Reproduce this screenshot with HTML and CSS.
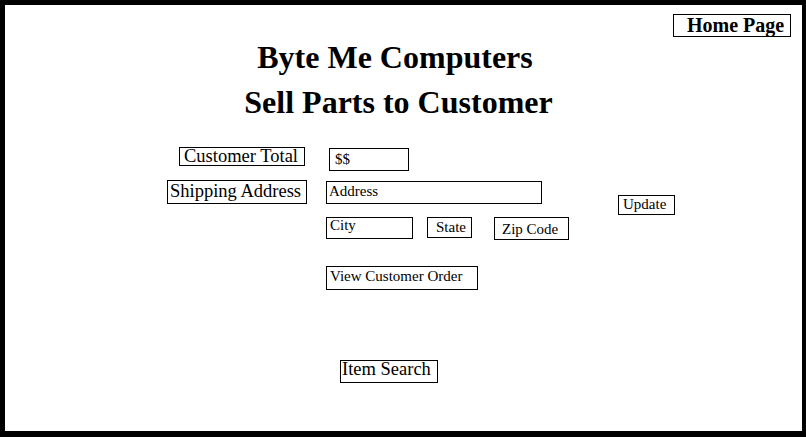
FILE: index.html
```html
<!DOCTYPE html>
<html lang="en">
<head>
<meta charset="utf-8">
<title>Sell Parts to Customer</title>
<link rel="stylesheet" href="styles.css">
</head>
<body>
<div class="frame">
  <div class="top-row">
    <div class="box home">Home Page</div>
  </div>
  <h1 class="title title-1">Byte Me Computers</h1>
  <h1 class="title title-2">Sell Parts to Customer</h1>

  <div class="row row-total">
    <div class="box label total-label">Customer Total</div>
    <div class="box field total-field">$$</div>
  </div>

  <div class="row row-address">
    <div class="box label ship-label">Shipping Address</div>
    <div class="fields">
      <div class="box field address">Address</div>
      <div class="city-row">
        <div class="box field city">City</div>
        <div class="box field state">State</div>
        <div class="box field zip">Zip Code</div>
      </div>
    </div>
    <div class="box field update">Update</div>
  </div>

  <div class="row row-order">
    <div class="box field order">View Customer Order</div>
  </div>

  <div class="row row-search">
    <div class="box label search">Item Search</div>
  </div>
</div>
</body>
</html>
```

FILE: styles.css
```css
html, body {
  margin: 0;
  padding: 0;
  background: #fff;
}

.frame {
  box-sizing: border-box;
  width: 806px;
  height: 437px;
  border-style: solid;
  border-color: #000;
  border-width: 5px 4px 6px 5px;
  font-family: "Liberation Serif", "Times New Roman", serif;
  color: #000;
  overflow: hidden;
}

.box {
  box-sizing: border-box;
  border: 1px solid #000;
  white-space: nowrap;
  flex: none;
}

.top-row {
  display: flex;
  justify-content: flex-end;
  margin-top: 9px;
}

.home {
  width: 118px;
  height: 23px;
  margin-right: 11px;
  padding-left: 13px;
  font-weight: bold;
  font-size: 20px;
  line-height: 21px;
}

.title {
  margin: 0;
  font-size: 32px;
  font-weight: bold;
  line-height: 45px;
  text-align: center;
}

.title-1 {
  margin-top: -2px;
  padding-right: 17px;
}

.title-2 {
  padding-right: 10px;
}

.row {
  display: flex;
  align-items: flex-start;
}

.label {
  font-size: 18.5px;
}

.field {
  font-size: 15px;
}

/* Customer total row */
.row-total {
  margin-top: 22px;
}

.total-label {
  width: 126px;
  height: 19px;
  margin-left: 174px;
  padding-left: 4px;
  line-height: 16px;
}

.total-field {
  width: 80px;
  height: 23px;
  margin-left: 24px;
  margin-top: 1px;
  padding-left: 5px;
  line-height: 20px;
}

/* Address block */
.row-address {
  margin-top: 9px;
}

.ship-label {
  width: 140px;
  height: 24px;
  margin-left: 162px;
  padding-left: 2px;
  line-height: 20px;
}

.fields {
  display: flex;
  flex-direction: column;
  margin-left: 19px;
}

.address {
  width: 216px;
  height: 23px;
  margin-top: 1px;
  padding-left: 2px;
  line-height: 18px;
}

.city-row {
  display: flex;
  align-items: flex-start;
  margin-top: 13px;
}

.city {
  width: 87px;
  height: 22px;
  padding-left: 3px;
  line-height: 14px;
}

.state {
  width: 45px;
  height: 21px;
  margin-left: 14px;
  padding-left: 8px;
  line-height: 18px;
}

.zip {
  width: 75px;
  height: 23px;
  margin-left: 22px;
  padding-left: 7px;
  line-height: 22px;
}

.update {
  width: 57px;
  height: 20px;
  margin-left: 49px;
  margin-top: 15px;
  padding-left: 4px;
  line-height: 16px;
}

/* Order row */
.row-order {
  margin-top: 26px;
}

.order {
  width: 152px;
  height: 24px;
  margin-left: 321px;
  padding-left: 3px;
  line-height: 18px;
}

/* Search row */
.row-search {
  margin-top: 70px;
}

.search {
  width: 98px;
  height: 23px;
  margin-left: 335px;
  padding-left: 1px;
  line-height: 17px;
}
```
